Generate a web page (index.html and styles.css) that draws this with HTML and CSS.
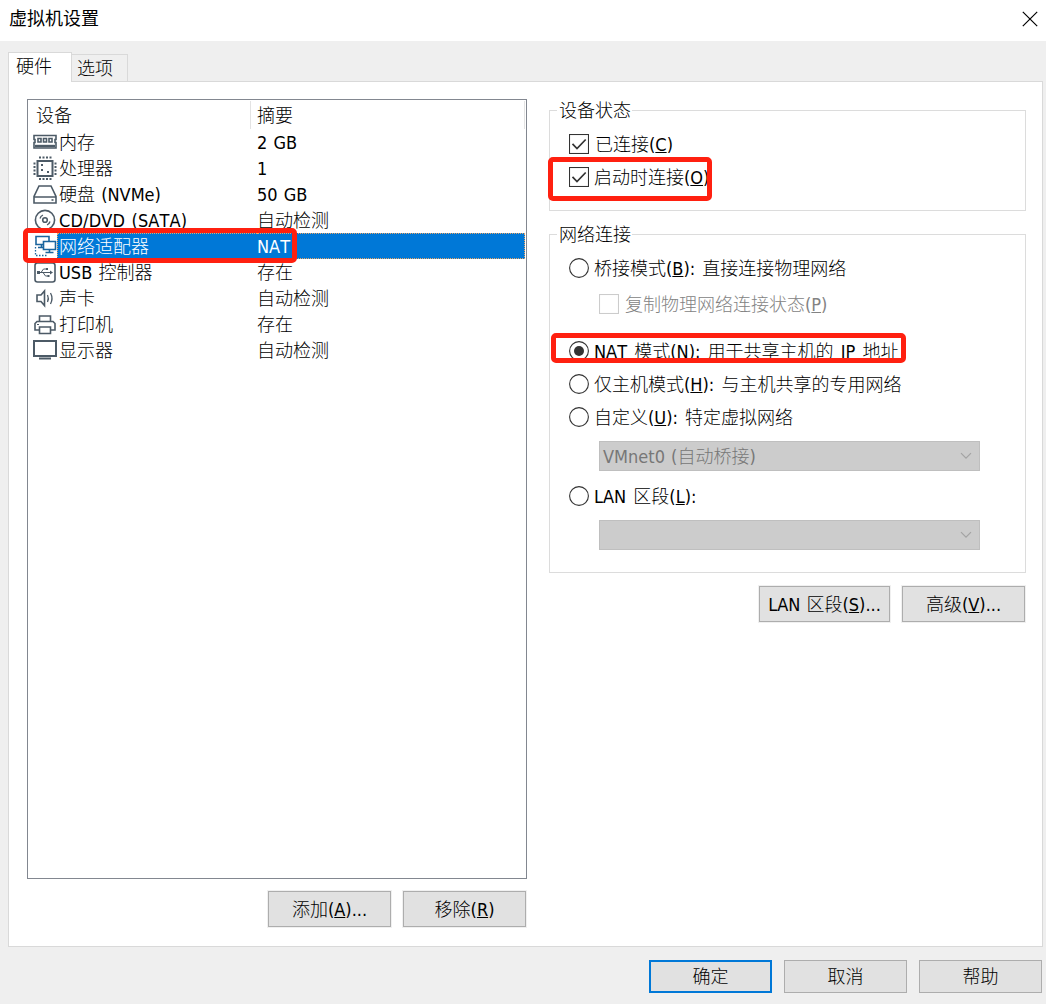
FILE: index.html
```html
<!DOCTYPE html>
<html lang="zh-CN">
<head>
<meta charset="utf-8">
<title>虚拟机设置</title>
<link rel="stylesheet" href="styles.css">
</head>
<body>
<div class="dialog">
  <header class="titlebar">
    <h1 class="title">虚拟机设置</h1>
    <svg class="close" width="16" height="16" viewBox="0 0 16 16"><path d="M.8.8 15.2 15.2M15.2.8.8 15.2" stroke="#000" stroke-width="1.2" fill="none"/></svg>
  </header>
  <nav class="tabs">
    <div class="tab tab-active">硬件</div>
    <div class="tab">选项</div>
  </nav>
  <main class="panel">
    <section class="left">
      <div class="list">
        <div class="list-head"><span class="col-device">设备</span><span class="col-summary">摘要</span></div>
        <div class="row">
          <svg class="icon" viewBox="0 0 24 26"><path d="M1 6.500h22v4h-1v3h1v5.500H1v-5.500h1v-3H1z"/><path d="M5 9.500h3v3.500H5zM10.500 9.500h3v3.500h-3zM16 9.500h3v3.500h-3z"/><path d="M2 17h20" stroke-width="2.400"/></svg>
          <span class="name">内存</span><span class="value">2 GB</span>
        </div>
        <div class="row">
          <svg class="icon" viewBox="0 0 24 26"><path d="M4.500 6h15v15h-15z" stroke-width="2"/><path d="M6 2.500h13M6 24h13" stroke-width="2" stroke-dasharray="2 1.500"/><path d="M1.500 7.500v13M22.500 7.500v13" stroke-width="2" stroke-dasharray="2 1.500"/><path class="solid" d="M8 9h2v2H8zM8 14h2v2H8zM14 16h2v2h-2z"/></svg>
          <span class="name">处理器</span><span class="value">1</span>
        </div>
        <div class="row">
          <svg class="icon" viewBox="0 0 24 26"><path d="M6 5h12l5 10.500V22H1v-6.500zM1 16h22"/><path d="M18.500 19h2"/></svg>
          <span class="name">硬盘 (NVMe)</span><span class="value">50 GB</span>
        </div>
        <div class="row">
          <svg class="icon" viewBox="0 0 24 26"><circle cx="12" cy="13" r="9.600"/><circle cx="12" cy="13" r="2.300"/><path d="M7 11.500a5 5 0 0 1 3-3.500M17 14.500a5 5 0 0 1-3 3.500" stroke-width="1.300"/></svg>
          <span class="name name-disc">CD/DVD (SATA)</span><span class="value">自动检测</span>
        </div>
        <div class="row row-selected">
          <svg class="icon icon-blue" viewBox="0 0 24 26"><path d="M10 11.500H3V3.500h13v5M8.500 11.500v3M5 14.500h5"/><path d="M10.500 8.500h12v8h-12zM16.500 16.500v3M12.500 19.500h8"/><path d="M2.500 14v8.500H15" stroke-dasharray="1.500 1.500" stroke-width="1.300"/></svg>
          <span class="name">网络适配器</span><span class="value">NAT</span>
        </div>
        <div class="row">
          <svg class="icon" viewBox="0 0 24 26"><rect x="2" y="4" width="20" height="19" rx="2.500"/><path d="M5 13.500h13M8 13.500l2.500-3.500h3M10 13.500l2.500 3.500h3" stroke-width="1"/><path class="solid" d="M4 12h3v3H4zM13 9h2v2h-2zM14.500 16h2v2h-2zM17 11.500l3 2-3 2z"/></svg>
          <span class="name">USB 控制器</span><span class="value">存在</span>
        </div>
        <div class="row">
          <svg class="icon" viewBox="0 0 24 26"><path d="M4 10h4l3.500-4v14.500L8 16.500H4z"/><path d="M14.500 10q1.700 3.500 0 7M17.500 8q3 5.500 0 11" stroke-width="1.300"/></svg>
          <span class="name">声卡</span><span class="value">自动检测</span>
        </div>
        <div class="row">
          <svg class="icon" viewBox="0 0 24 26"><path d="M6.500 10.500V5h11v5.500M6.500 19H2v-6.500l2-2h16l2 2V19h-4.500M6.500 16h11v6.500h-11z"/><path d="M4 13.500h2" stroke-width="1.200"/></svg>
          <span class="name">打印机</span><span class="value">存在</span>
        </div>
        <div class="row">
          <svg class="icon" viewBox="0 0 24 26"><path d="M1 4h22v15H1z" stroke-width="2"/><path d="M6 21.500h12" stroke-width="2"/></svg>
          <span class="name">显示器</span><span class="value">自动检测</span>
        </div>
      </div>
      <div class="actions">
        <button class="btn btn-framed">添加(<u>A</u>)...</button>
        <button class="btn btn-framed">移除(<u>R</u>)</button>
      </div>
    </section>
    <section class="right">
      <fieldset class="group group-status">
        <legend>设备状态</legend>
        <label class="opt opt-connected"><svg class="mark" viewBox="0 0 20 20"><rect x=".5" y=".5" width="19" height="19"/><path d="M3.500 9.800 8 14.500l8.700-9" stroke-width="1.700"/></svg><span>已连接(<u>C</u>)</span></label>
        <label class="opt opt-poweron"><svg class="mark" viewBox="0 0 20 20"><rect x=".5" y=".5" width="19" height="19"/><path d="M3.500 9.800 8 14.500l8.700-9" stroke-width="1.700"/></svg><span>启动时连接(<u>O</u>)</span></label>
      </fieldset>
      <fieldset class="group group-network">
        <legend>网络连接</legend>
        <label class="opt opt-bridge"><svg class="mark" viewBox="0 0 20 20"><circle cx="10" cy="10" r="9.400"/></svg><span>桥接模式(<u>B</u>): 直接连接物理网络</span></label>
        <label class="opt opt-replicate"><svg class="mark mark-off" viewBox="0 0 20 20"><rect x=".5" y=".5" width="19" height="19"/></svg><span>复制物理网络连接状态(<u>P</u>)</span></label>
        <label class="opt opt-nat"><svg class="mark" viewBox="0 0 20 20"><circle cx="10" cy="10" r="9.400"/><circle class="dot" cx="10" cy="10" r="5"/></svg><span>NAT 模式(<u>N</u>): 用于共享主机的 IP 地址</span></label>
        <label class="opt opt-host"><svg class="mark" viewBox="0 0 20 20"><circle cx="10" cy="10" r="9.400"/></svg><span>仅主机模式(<u>H</u>): 与主机共享的专用网络</span></label>
        <label class="opt opt-custom"><svg class="mark" viewBox="0 0 20 20"><circle cx="10" cy="10" r="9.400"/></svg><span>自定义(<u>U</u>): 特定虚拟网络</span></label>
        <div class="combo"><span>VMnet0 (自动桥接)</span><svg width="12" height="8" viewBox="0 0 12 8"><path d="m1 1.200 5 5 5-5"/></svg></div>
        <label class="opt opt-lan"><svg class="mark" viewBox="0 0 20 20"><circle cx="10" cy="10" r="9.400"/></svg><span>LAN 区段(<u>L</u>):</span></label>
        <div class="combo"><span></span><svg width="12" height="8" viewBox="0 0 12 8"><path d="m1 1.200 5 5 5-5"/></svg></div>
      </fieldset>
      <div class="actions">
        <button class="btn btn-framed btn-lan">LAN 区段(<u>S</u>)...</button>
        <button class="btn btn-framed">高级(<u>V</u>)...</button>
      </div>
    </section>
  </main>
  <footer class="footer">
    <button class="btn btn-default">确定</button>
    <button class="btn">取消</button>
    <button class="btn">帮助</button>
  </footer>
  <div class="highlight highlight-adapter"></div>
  <div class="highlight highlight-poweron"></div>
  <div class="highlight highlight-nat"></div>
</div>
</body>
</html>
```
FILE: styles.css
```css
* { box-sizing: border-box; }

body {
  margin: 0;
  font: 300 18px/26px "DejaVu Sans Condensed", "Noto Sans CJK SC", sans-serif;
  font-kerning: none;
  word-spacing: 1px;
  color: #000;
}

.dialog {
  position: relative;
  display: flex;
  flex-direction: column;
  width: 1046px;
  height: 1004px;
  overflow: hidden;
  background: #efefef;
}

.titlebar {
  display: flex;
  flex: none;
  justify-content: space-between;
  height: 41px;
  padding: 0 8px 0 9px;
  background: #fff;
}

.title {
  margin: 4px 0 0;
  font: 400 18px/26px "Noto Sans CJK SC", sans-serif;
}

.close { margin-top: 11px; }

.tabs {
  display: flex;
  flex: none;
  align-items: flex-end;
  height: 41px;
  padding-left: 8px;
}

.tab {
  width: 56px;
  height: 28px;
  padding: 1px 0 0 5px;
  border: 1px solid #d9d9d9;
  border-left: 0;
}

.tab-active {
  z-index: 1;
  width: 64px;
  height: 30px;
  padding: 1px 0 0 7px;
  border-left: 1px solid #d9d9d9;
  border-bottom: 0;
  background: #fff;
}

.panel {
  display: flex;
  flex: none;
  width: 1035px;
  height: 866px;
  margin: -1px 0 0 8px;
  padding: 17px 16px 0 18px;
  border: 1px solid #d9d9d9;
  background: #fff;
}

.left { width: 500px; }

.list {
  height: 780px;
  border: 1px solid #828790;
}

.list-head {
  display: flex;
  height: 29px;
  padding-top: 1px;
}

.col-device, .col-summary {
  height: 28px;
  padding-top: 2px;
  border-right: 1px solid #e3e3e3;
}

.col-device { width: 223px; padding-left: 8px; }
.col-summary { width: 274px; padding-left: 6px; }

.row {
  display: flex;
  height: 26px;
  padding-left: 5px;
  line-height: 28px;
  white-space: nowrap;
}

.icon {
  flex: none;
  width: 24px;
  height: 26px;
  fill: none;
  stroke: #4c5a66;
  stroke-width: 1.6;
}

.icon .solid { fill: #4c5a66; stroke: none; }
.icon-blue { stroke: #1c659d; }

.name { width: 200px; padding-left: 2px; }
.name-disc { letter-spacing: .15px; }
.value { width: 268px; }

.row-selected { color: #fff; }
.row-selected .name, .row-selected .value {
  border: 1px dotted #e8a566;
  background: #0078d7;
  line-height: 26px;
}
.row-selected .name { padding-left: 1px; border-right: 0; }
.row-selected .value { border-left: 0; }

.actions {
  display: flex;
  justify-content: flex-end;
  gap: 12px;
  margin-top: 12px;
  padding-right: 1px;
}

.btn {
  width: 123px;
  height: 33px;
  padding: 0;
  border: 1px solid #adadad;
  background: #e1e1e1;
  color: #000;
  font: inherit;
  word-spacing: inherit;
}

.btn-framed {
  height: 36px;
  padding-top: 1px;
  box-shadow: 0 0 0 1px #f0f0f0;
}
.btn-lan { width: 131px; }
.btn-default { border: 2px solid #0078d7; }

.right { width: 477px; margin: 0 0 0 22px; }

.group {
  min-width: 0;
  margin: 0;
  padding: 0 0 0 19px;
  border: 1px solid #dcdcdc;
}

.group legend {
  height: 26px;
  margin-left: -12px;
  padding: 0 1px 0 2px;
  line-height: 28px;
}

.group-status { height: 114px; margin-top: -2px; }
.group-network { height: 352px; margin-top: 10px; }

.opt {
  display: flex;
  align-items: center;
  gap: 5px;
  height: 26px;
  word-spacing: 2px;
  white-space: nowrap;
}
.opt span, .combo span { padding-top: 2px; }

.mark {
  flex: none;
  width: 20px;
  height: 20px;
  fill: #fff;
  stroke: #333;
  stroke-width: 1.1;
}
.mark path { fill: none; }
.mark .dot { fill: #333; stroke: none; }
.mark-off { stroke: #ccc; }

.opt-connected { gap: 6px; margin-top: 8px; }
.opt-poweron { margin-top: 7px; }
.opt-bridge { margin-top: 8px; }
.opt-replicate { gap: 6px; margin: 10px 0 0 30px; color: #838383; }
.opt-nat { margin-top: 21px; }
.opt-host { margin-top: 7px; }
.opt-custom { margin-top: 7px; }
.opt-lan { margin-top: 12px; }

.combo {
  display: flex;
  align-items: center;
  justify-content: space-between;
  width: 381px;
  height: 30px;
  margin: 11px 0 0 30px;
  padding: 0 7px 0 3px;
  border: 1px solid #bfbfbf;
  background: #ccc;
  color: #777;
}
.combo path { fill: none; stroke: #a3a3a3; stroke-width: 1.2; }

.right .actions { margin-top: 13px; }

.footer {
  display: flex;
  justify-content: flex-end;
  gap: 12px;
  padding: 13px 4px 0 0;
}

.highlight {
  position: absolute;
  border: 5px solid #ff2010;
  border-radius: 5px;
}
.highlight-adapter { left: 23px; top: 228px; width: 274px; height: 35px; }
.highlight-poweron { left: 548px; top: 157px; width: 164px; height: 44px; }
.highlight-nat { left: 551px; top: 333px; width: 355px; height: 30px; }
```
